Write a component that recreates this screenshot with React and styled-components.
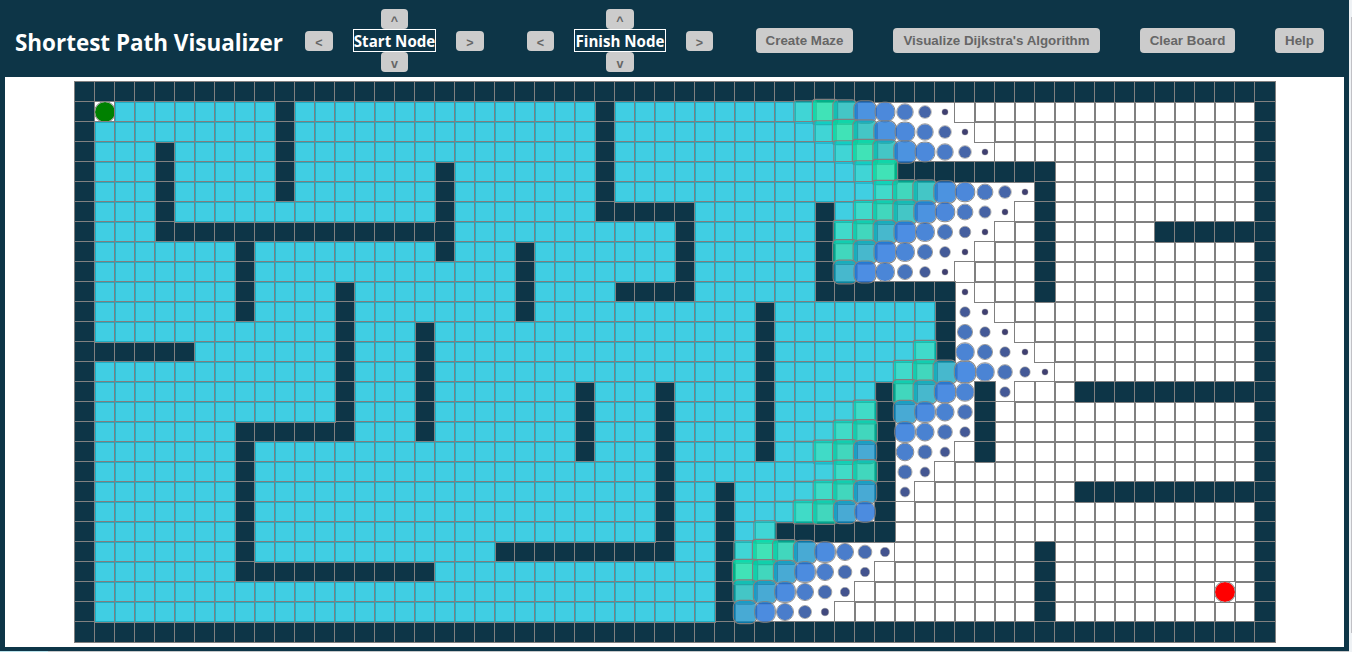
import React from "react";
import styled, { createGlobalStyle } from "styled-components";

const NAVY = "#0d3547";
const COLS = 60;
const ROWS = 28;
const START = { row: 1, col: 1 };
const FINISH = { row: 25, col: 57 };

/* Each wall is a straight run: [firstRow, firstCol, lastRow, lastCol]. */
const WALLS = [
  [0, 0, 0, 59], [27, 0, 27, 59], [0, 0, 27, 0], [0, 59, 27, 59],
  [1, 10, 5, 10], [3, 4, 7, 4], [7, 4, 7, 18], [4, 18, 8, 18],
  [1, 26, 6, 26], [6, 26, 6, 30], [6, 30, 10, 30], [10, 27, 10, 30],
  [8, 8, 11, 8], [8, 22, 11, 22], [10, 13, 17, 13], [17, 8, 17, 13],
  [17, 8, 24, 8], [24, 8, 24, 17], [12, 17, 17, 17], [13, 1, 13, 5],
  [11, 34, 18, 34], [15, 25, 18, 25], [15, 29, 23, 29], [23, 21, 23, 29],
  [20, 32, 26, 32], [22, 35, 22, 40], [15, 40, 22, 40], [4, 41, 4, 48],
  [4, 48, 10, 48], [6, 37, 10, 37], [10, 37, 10, 43], [10, 43, 13, 43],
  [7, 54, 7, 58], [15, 50, 15, 58], [15, 45, 18, 45], [20, 50, 20, 58],
  [23, 48, 26, 48],
];

const key = (row, col) => row * COLS + col;

const wallSet = new Set();
WALLS.forEach(([r0, c0, r1, c1]) => {
  for (let r = r0; r <= r1; r++) for (let c = c0; c <= c1; c++) wallSet.add(key(r, c));
});

/* Visit order and distance of every node reachable from the start node. */
function search() {
  const seen = new Map([[key(START.row, START.col), { order: 0, distance: 0 }]]);
  const queue = [START];
  for (let head = 0; head < queue.length; head++) {
    const { row, col } = queue[head];
    const distance = seen.get(key(row, col)).distance + 1;
    [[row - 1, col], [row, col - 1], [row, col + 1], [row + 1, col]].forEach(([r, c]) => {
      const k = key(r, c);
      if (wallSet.has(k) || seen.has(k)) return;
      seen.set(k, { order: queue.length, distance });
      queue.push({ row: r, col: c });
    });
  }
  return seen;
}

const visits = search();
const current = visits.get(key(14, 48));

/*
 * Animation progress of the nodes that many steps behind the newest ones.
 * Each step is listed from the top row down as [firstRow, progress].
 */
const PROGRESS = [
  [[0, 0]],
  [[0, 0.165], [6, 0.15], [7, 0.135], [8, 0.115], [10, 0.105], [18, 0.09], [23, 0.08], [26, 0.035]],
  [[0, 0.28], [5, 0.26], [7, 0.24], [14, 0.225], [18, 0.205], [23, 0.195], [26, 0.175]],
  [[0, 0.395], [5, 0.385], [7, 0.365], [11, 0.35], [16, 0.335], [18, 0.32], [23, 0.3]],
  [[0, 0.51], [7, 0.49], [11, 0.46], [16, 0.43]],
  [[0, 0.62], [7, 0.585], [16, 0.554]],
  [[0, 0.745], [5, 0.67], [25, 0.62]],
  [[0, 0.875], [5, 0.825], [16, 0.81], [23, 0.745]],
  [[0, 0.98], [5, 0.96], [16, 0.95], [22, 0.875]],
];

function progressOf(behind, row) {
  const step = PROGRESS[behind];
  if (!step) return 1;
  return step.filter(([firstRow]) => row >= firstRow).pop()[1];
}

/* cubic-bezier(0, 0, .58, 1) */
function easeOut(x) {
  if (x <= 0) return 0;
  if (x >= 1) return 1;
  let lo = 0;
  let hi = 1;
  for (let i = 0; i < 30; i++) {
    const t = (lo + hi) / 2;
    const bx = 3 * (1 - t) * t * t * 0.58 + t * t * t;
    if (bx < x) lo = t;
    else hi = t;
  }
  const t = (lo + hi) / 2;
  return 3 * (1 - t) * t * t + t * t * t;
}

const mix = (a, b, t) => a + (b - a) * t;
const COLOR_STOPS = [
  [0, [0, 0, 66]],
  [0.5, [17, 104, 217]],
  [0.75, [0, 217, 159]],
  [1, [0, 190, 218]],
];

function visitedFrame(p) {
  let i = 0;
  while (i < 2 && p > COLOR_STOPS[i + 1][0]) i++;
  const [from, a] = COLOR_STOPS[i];
  const [to, b] = COLOR_STOPS[i + 1];
  const t = easeOut((p - from) / (to - from));
  const rgb = a.map((v, n) => Math.round(mix(v, b[n], t)));
  const scale = p < 0.75 ? mix(0.3, 1.2, easeOut(p / 0.75)) : mix(1.2, 1, easeOut((p - 0.75) / 0.25));
  return {
    backgroundColor: `rgba(${rgb.join(",")},0.75)`,
    transform: `scale(${scale.toFixed(3)})`,
    borderRadius: `${(100 * (1 - easeOut(p))).toFixed(1)}%`,
  };
}

const GlobalStyle = createGlobalStyle`
  body { margin: 0; background: #eef1f4; overflow: hidden; }
`;

const Window = styled.div`
  display: grid;
  grid-template-columns: 1349px 3px;
  grid-template-rows: 651px 1px;
`;

const Page = styled.div`
  box-sizing: border-box;
  border: 5px solid ${NAVY};
  border-top: 0;
  border-bottom-width: 4px;
  background: #fff;
`;

const VerticalTrack = styled.div`
  width: 1px;
  height: 616px;
  margin: 17px 0 0 2px;
  background: #c1c1c6;
`;

const BottomEdge = styled.div`
  background: linear-gradient(to right, #b9e1ea 48px, #c6c8ca 48px);
`;

const Header = styled.header`
  display: flex;
  height: 77px;
  margin: 0 -5px;
  background: ${NAVY};
  color: #fff;
  font-family: "Open Sans", "Noto Sans", sans-serif;
  font-weight: 700;
`;

const Title = styled.h1`
  width: 268px;
  margin: 26px 22px 0 15px;
  font-size: 22.45px;
  line-height: 34px;
  white-space: nowrap;
`;

const Mover = styled.div`
  display: grid;
  grid-template-columns: ${(p) => p.$side}px ${(p) => p.$label}px ${(p) => p.$side}px;
  column-gap: 20px;
  grid-template-rows: 20px 23px 20px;
  justify-items: center;
  align-items: center;
  height: 63px;
  margin: 9px 43px 0 0;
`;

const NodeLabel = styled.div`
  box-sizing: border-box;
  display: flex;
  justify-content: center;
  grid-area: 2 / 2;
  width: 100%;
  height: 23px;
  border: 1px solid #fff;
  font-size: 15.1px;
  line-height: 22px;
  white-space: nowrap;
`;

const Button = styled.button`
  box-sizing: border-box;
  width: ${(p) => p.$w}px;
  height: 25px;
  padding: 0;
  margin: 28px ${(p) => p.$after || 0}px 0 0;
  border: 0;
  border-radius: 4px;
  background: #ccc;
  color: #666;
  font: 700 13.333px/25px "Liberation Sans", Arial, sans-serif;
  text-align: center;
  white-space: nowrap;
`;

const ArrowButton = styled(Button)`
  height: 20px;
  margin: 0;
  font-size: 12.5px;
  line-height: 24px;
  grid-area: ${(p) => p.$area};
`;

const Board = styled.div`
  display: grid;
  grid-template-columns: repeat(${COLS}, 20px);
  grid-auto-rows: 20px;
  width: 1200px;
  margin: 5px 0 0 70px;
`;

const Cell = styled.div`
  outline: 1px solid gray;
`;

const WallCell = styled(Cell)`
  z-index: 0;
  background: ${NAVY};
`;

/* Visited nodes lie over the walls, so a growing node overlaps its neighbours. */
const VisitedCell = styled(Cell)`
  z-index: 1;
  background: rgba(0, 190, 218, 0.75);
`;

const EndpointCell = styled(Cell)`
  z-index: 0;
  background: #fff;
  &::after {
    content: "";
    display: block;
    height: 20px;
    border-radius: 50%;
    outline: 1px solid gray;
    background: ${(p) => p.$color};
  }
`;

function GridCell({ row, col }) {
  const k = key(row, col);
  if (wallSet.has(k)) return <WallCell />;
  if (row === START.row && col === START.col) return <EndpointCell $color="green" />;
  if (row === FINISH.row && col === FINISH.col) return <EndpointCell $color="red" />;
  const visit = visits.get(k);
  if (!visit || visit.order > current.order) return <Cell />;
  const progress = progressOf(current.distance - visit.distance, row);
  if (progress >= 1) return <VisitedCell />;
  return <VisitedCell style={visitedFrame(progress)} />;
}

function NodeMover({ label, width, side, middle }) {
  return (
    <Mover $label={width} $side={side}>
      <ArrowButton $area="1 / 2" $w={middle}>^</ArrowButton>
      <ArrowButton $area="2 / 1" $w={side}>&lt;</ArrowButton>
      <NodeLabel>{label}</NodeLabel>
      <ArrowButton $area="2 / 3" $w={side}>&gt;</ArrowButton>
      <ArrowButton $area="3 / 2" $w={middle}>v</ArrowButton>
    </Mover>
  );
}

export default function App() {
  const cells = [];
  for (let row = 0; row < ROWS; row++)
    for (let col = 0; col < COLS; col++) cells.push(<GridCell key={key(row, col)} row={row} col={col} />);
  return (
    <>
      <GlobalStyle />
      <Window>
        <Page>
          <Header>
            <Title>Shortest Path Visualizer</Title>
            <NodeMover label="Start Node" width={83} side={28} middle={27} />
            <NodeMover label="Finish Node" width={92} side={27} middle={28} />
            <Button $w={97} $after={40}>Create Maze</Button>
            <Button $w={207} $after={40}>Visualize Dijkstra's Algorithm</Button>
            <Button $w={95} $after={40}>Clear Board</Button>
            <Button $w={49}>Help</Button>
          </Header>
          <Board>{cells}</Board>
        </Page>
        <VerticalTrack />
        <BottomEdge />
      </Window>
    </>
  );
}
